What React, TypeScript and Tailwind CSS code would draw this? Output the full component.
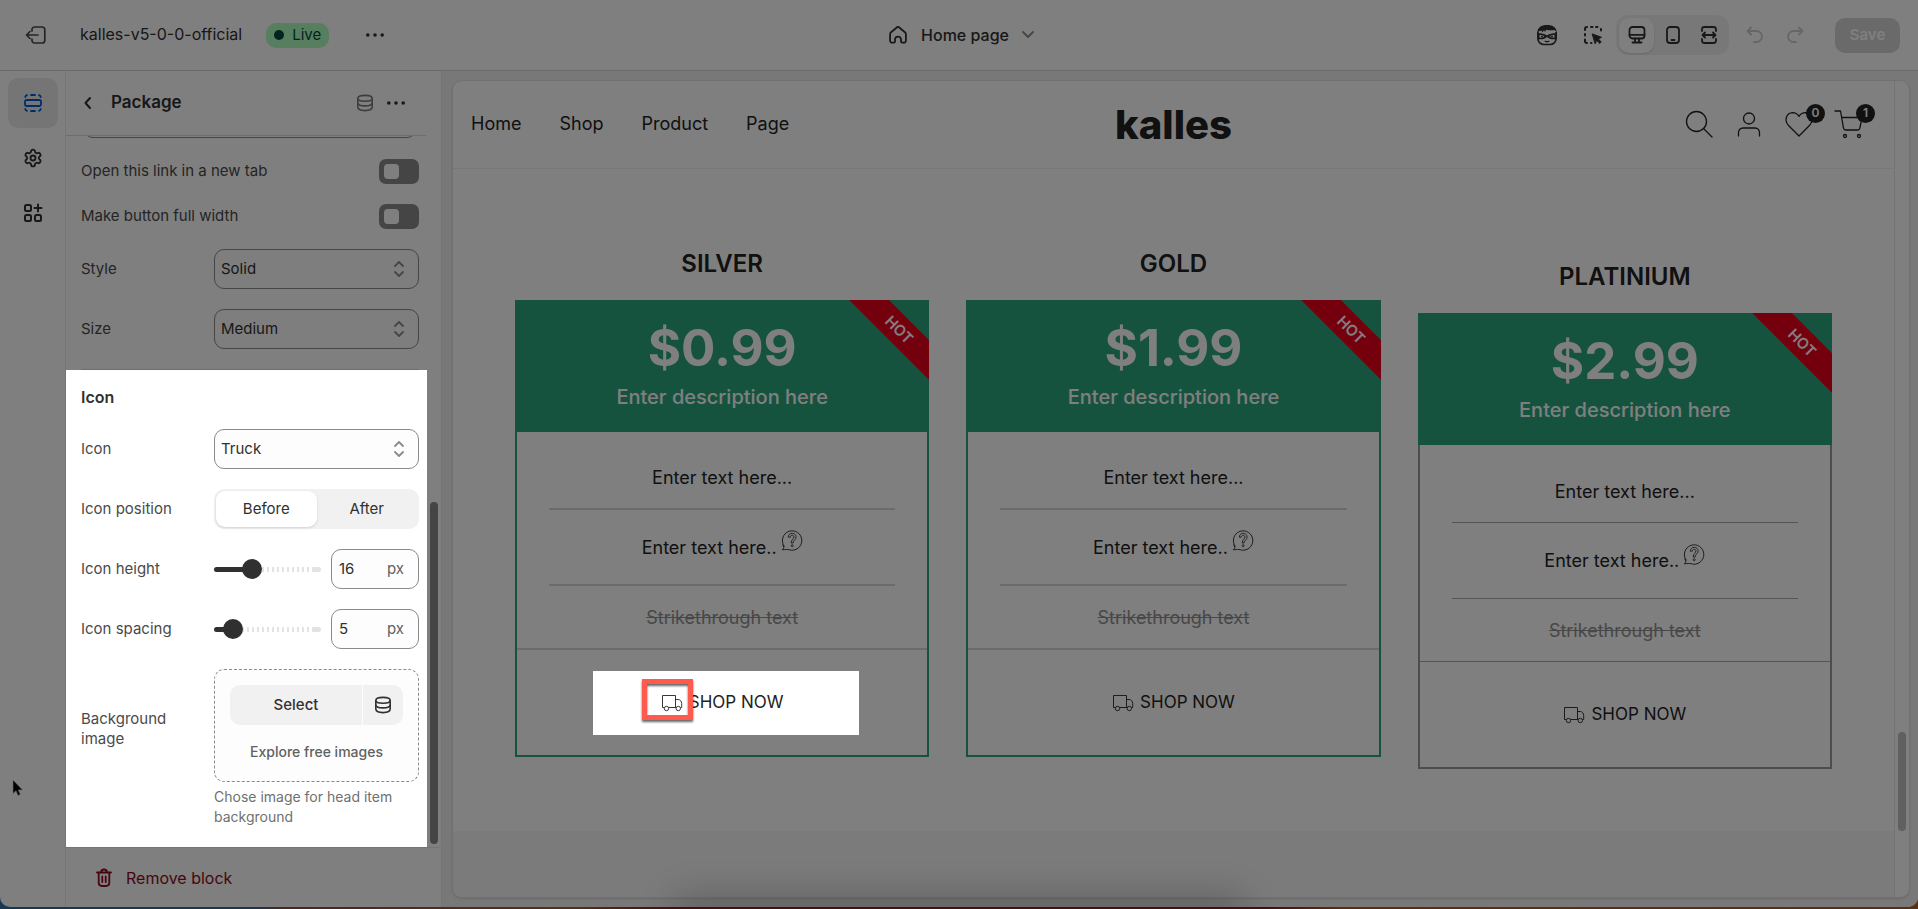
import React, { useState } from 'react';
import { clsx } from 'clsx';
import { Settings } from 'lucide-react';

const INK = '#303030';

type IconProps = { className?: string };

const DotsIcon = ({ className = '' }: IconProps) => (
    <svg viewBox="0 0 20 20" className={clsx('h-5 w-5', className)} fill={INK} aria-hidden="true">
        <circle cx="2.8" cy="10" r="1.8" />
        <circle cx="10" cy="10" r="1.8" />
        <circle cx="17.2" cy="10" r="1.8" />
    </svg>
);

const DatabaseIcon = ({ className = '' }: IconProps) => (
    <svg viewBox="0 0 18 18" className={clsx('h-[18px] w-[18px]', className)} fill="none" stroke="currentColor" strokeWidth="1.6" aria-hidden="true">
        <path d="M1.800 4.500c0-1.900 2.600-3.100 7.200-3.100s7.200 1.200 7.200 3.100-2.600 2.700-7.200 2.700-7.200-.8-7.200-2.700z" />
        <path d="M1.800 4.500v8.300c0 2.500 2.600 3.800 7.200 3.800s7.200-1.300 7.200-3.800V4.500" />
        <path d="M1.800 8.800c0 2 2.600 3.100 7.200 3.100s7.200-1.100 7.200-3.100" />
    </svg>
);

const SelectArrows = () => (
    <svg viewBox="0 0 12 18" className="pointer-events-none absolute right-[14px] top-[11px] h-[18px] w-3" fill="none" stroke="#8a8a8a" strokeWidth="1.800" strokeLinecap="round" strokeLinejoin="round" aria-hidden="true">
        <path d="M2 6l4-4 4 4M2 12l4 4 4-4" />
    </svg>
);

const TruckIcon = () => (
    <svg viewBox="0 0 22 18" className="h-[18px] w-[22px] shrink-0" fill="none" stroke="#222" strokeWidth="0.9" aria-hidden="true">
        <path d="M3.300 13.500H1.500v-12h13v12H7.700M14.500 5.500h2.700c2 0 3.500 2 3.500 4v4h-1.200M14.500 13.500h.7" />
        <circle cx="5.500" cy="14.500" r="2.200" />
        <circle cx="17.300" cy="14.500" r="2.200" />
    </svg>
);

const HelpIcon = () => (
    <svg viewBox="0 0 22 22" className="h-[22px] w-[22px]" fill="none" stroke="#222" strokeWidth="0.9" aria-hidden="true">
        <path d="M3.400 17.400A9.700 9.700 0 1 1 8.300 20.800c-2-.8-3.900 0-7.100-.1 1-.9 1.900-1.400 1.600-2.600l-1.200-2.500" />
        <path d="M7.300 8.200C7.300 5.800 9 4.300 11.200 4.300s3.900 1.600 3.900 3.600c0 3-3 3.200-3 6.100h-1.900c0-3.600 2.700-4 2.700-6 0-1-.7-1.700-1.700-1.700-1.200 0-1.900.8-1.900 1.900z" strokeWidth="0.8" />
        <circle cx="11.200" cy="16.700" r="1" strokeWidth="0.8" />
    </svg>
);

const inkStroke = {
    fill: 'none',
    stroke: INK,
    strokeWidth: 1.8,
    strokeLinecap: 'round' as const,
    strokeLinejoin: 'round' as const,
    viewBox: '0 0 20 20',
    className: 'h-5 w-5',
    'aria-hidden': true
};

const TopBar = () => (
    <header className="grid h-[71px] shrink-0 grid-cols-[1fr_auto_1fr] items-center border-b border-[#d4d4d4] bg-white">
        <div className="flex items-center">
            <button aria-label="Exit editor" className="ml-[25px] flex h-8 w-[22px] items-center justify-center">
                <svg {...inkStroke} viewBox="0 0 22 20" className="h-5 w-[22px]" strokeWidth="1.700" stroke="#4a4a4a">
                    <path d="M7 6V4.500A2.500 2.500 0 0 1 9.500 2H17a2.800 2.800 0 0 1 2.800 2.800v10.400A2.800 2.800 0 0 1 17 18H9.500A2.500 2.500 0 0 1 7 15.500V14M13 10H1.500M5 6.500L1.500 10 5 13.500" />
                </svg>
            </button>
            <span className="ml-[33px] pb-[2px] text-base text-[#303030]">kalles-v5-0-0-official</span>
            <span className="ml-6 flex h-[25px] items-center gap-2 rounded-[10px] bg-[#affebf] px-2 text-[15px] text-[#014b40]">
                <span className="h-[10px] w-[10px] rounded-full bg-[#014b40]" />
                Live
            </span>
            <button aria-label="Theme actions" className="ml-9"><DotsIcon /></button>
        </div>

        <button className="flex items-center gap-[14px] pl-[6px] text-base font-medium text-[#303030]">
            <svg {...inkStroke} className="h-[18px] w-[18px]" strokeWidth="2">
                <path d="M1.200 9.400c0-1 .4-1.800 1.100-2.500L8.600 1.600a2 2 0 0 1 2.800 0l6.300 5.300c.7.700 1.100 1.500 1.100 2.500v6.800a2.300 2.300 0 0 1-2.300 2.300h-1.700a1.500 1.500 0 0 1-1.500-1.500v-2a3.300 3.300 0 0 0-6.600 0v2a1.500 1.500 0 0 1-1.500 1.500H3.500a2.300 2.300 0 0 1-2.300-2.300z" />
            </svg>
            Home page
            <svg viewBox="0 0 14 10" className="-ml-[2px] h-[10px] w-[14px]" fill="none" stroke="#8a8a8a" strokeWidth="1.800" strokeLinecap="round" strokeLinejoin="round" aria-hidden="true">
                <path d="M2 2l5 5 5-5" />
            </svg>
        </button>

        <div className="flex items-center justify-end pr-[18px]">
            <button aria-label="Assistant" className="mr-[25px]">
                <svg viewBox="0 0 22 22" className="h-[22px] w-[22px]" fill="none" stroke={INK} strokeWidth="1.700" aria-hidden="true">
                    <path d="M1.900 8v6.500c0 3.600 3 6 6 6h6.200c3 0 6-2.400 6-6V8" />
                    <path d="M1.300 8.500C1.500 3.500 5 .9 11 .9s9.700 2.600 9.700 7.600l-2-2.500c-3 .6-6 .3-8.500-.3L9 8 8 6 6.700 8.200 5.300 6.500 3.200 7.200z" fill={INK} stroke="none" />
                    <path d="M1.500 9.500c3.500-.8 7 .2 9.500 2 2.500-1.800 6-2.800 9.500-2v5.300c-3.500 1.200-7 .5-9.500-1.900-2.500 2.400-6 3.100-9.500 1.900z" fill={INK} stroke="none" />
                    <path d="M3.500 11.200c1.700-.3 3.500.2 4.900 1.200-1.500 1.200-3.200 1.600-4.900 1.200zM18.500 11.200c-1.700-.3-3.500.2-4.900 1.200 1.500 1.200 3.200 1.600 4.900 1.200z" fill="#fff" stroke="none" />
                    <circle cx="6" cy="12.400" r="1" fill={INK} stroke="none" />
                    <circle cx="16" cy="12.400" r="1" fill={INK} stroke="none" />
                    <path d="M8.700 17c1.500.9 3.100.9 4.600 0" strokeWidth="1.400" />
                </svg>
            </button>
            <button aria-label="Inspector" className="mr-[13px]">
                <svg {...inkStroke} strokeWidth="2">
                    <path d="M2 5V4a2 2 0 0 1 2-2M8 2h1.500M13 2h1.500M18 4v1.500M2 9v1.500M2 14.500V16a2 2 0 0 0 2 2M8 18h.5" />
                    <path d="M9.500 9l9 3.300-3.300 1.500 3 3.200-1.400 1.400-3.200-3.100-1.300 3.200z" fill={INK} strokeWidth="1" />
                </svg>
            </button>
            <div className="flex h-10 w-[113px] items-center justify-between rounded-[12px] bg-[#f1f1f1] px-[3px]">
                <button aria-label="Desktop" className="flex h-[35px] w-[35px] items-center justify-center rounded-[10px] bg-white shadow">
                    <svg {...inkStroke}>
                        <rect x="2.500" y="2" width="15" height="11.500" rx="3" />
                        <path d="M2.500 9.800h15M8 13.500V17M12 13.500V17M5.500 17.500h9" />
                    </svg>
                </button>
                <button aria-label="Mobile" className="flex h-[35px] w-[35px] items-center justify-center">
                    <svg {...inkStroke}>
                        <rect x="4" y="2" width="12" height="16" rx="3" />
                        <path d="M8 2.200h4M8.500 15h3" />
                    </svg>
                </button>
                <button aria-label="Fullscreen" className="flex h-[35px] w-[35px] items-center justify-center">
                    <svg {...inkStroke}>
                        <path d="M3 6V4.500A2.500 2.500 0 0 1 5.500 2h9A2.500 2.500 0 0 1 17 4.500V6M3 14v1.500A2.500 2.500 0 0 0 5.500 18h9a2.500 2.500 0 0 0 2.500-2.500V14M4 10h12M6 7.500L3.500 10 6 12.500M14 7.500l2.500 2.500-2.500 2.500" />
                    </svg>
                </button>
            </div>
            <button aria-label="Undo" disabled className="ml-4">
                <svg {...inkStroke} stroke="#cccccc">
                    <path d="M6 2.500L2.500 6 6 9.500M3 6h8.500a5.500 5.500 0 0 1 0 11H9" />
                </svg>
            </button>
            <button aria-label="Redo" disabled className="ml-5">
                <svg {...inkStroke} stroke="#cccccc">
                    <path d="M14 2.500L17.500 6 14 9.500M17 6H8.500a5.500 5.500 0 0 0 0 11H11" />
                </svg>
            </button>
            <button disabled className="ml-[30px] h-[35px] w-[65px] rounded-[10px] bg-[#d4d4d4] text-[15px] font-semibold text-white">Save</button>
        </div>
    </header>
);

const Rail = () => (
    <nav aria-label="Editor" className="flex w-[66px] shrink-0 flex-col items-center gap-[5px] border-r border-[#ebebeb] pt-[7px]">
        <button aria-label="Sections" className="flex h-[50px] w-[50px] items-center justify-center rounded-[10px] bg-[#ebebeb]">
            <svg {...inkStroke} stroke="#005bd3">
                <rect x="2" y="7" width="16" height="6" rx="1.500" />
                <path d="M2.200 4A2.500 2.500 0 0 1 4 2.200M8 2h4M16 2.200A2.500 2.500 0 0 1 17.800 4M2.200 16A2.500 2.500 0 0 0 4 17.800M8 18h4M16 17.800a2.500 2.500 0 0 0 1.800-1.800" />
            </svg>
        </button>
        <button aria-label="Theme settings" className="flex h-[50px] w-[50px] items-center justify-center">
            <Settings size={20} color={INK} strokeWidth={2.2} />
        </button>
        <button aria-label="App embeds" className="flex h-[50px] w-[50px] items-center justify-center">
            <svg {...inkStroke} strokeWidth="2">
                <rect x="2" y="2" width="6" height="6" rx="1.500" />
                <rect x="2" y="12" width="6" height="6" rx="1.500" />
                <rect x="12" y="12" width="6" height="6" rx="1.500" />
                <path d="M15 1.500v7M11.500 5h7" />
            </svg>
        </button>
    </nav>
);

const Toggle = ({ id, label }: { id: string; label: string }) => {
    const [on, setOn] = useState(false);
    return (
        <div className="flex h-[25px] items-center justify-between">
            <label htmlFor={id}>{label}</label>
            <span className="relative h-[25px] w-10">
                <input id={id} type="checkbox" role="switch" checked={on} onChange={(e) => setOn(e.target.checked)} className="h-[25px] w-10 cursor-pointer appearance-none rounded-[7px] bg-[#8a8a8a] checked:bg-[#303030]" />
                <span className={clsx('pointer-events-none absolute top-[5px] h-[15px] w-[15px] rounded-[4px] bg-white', on ? 'left-5' : 'left-[5px]')} />
            </span>
        </div>
    );
};

const SelectRow = ({ id, label, options }: { id: string; label: string; options: string[] }) => (
    <div className="flex h-10 items-center justify-between">
        <label htmlFor={id}>{label}</label>
        <span className="relative h-10 w-[205px]">
            <select id={id} className="h-10 w-full appearance-none rounded-[10px] border border-[#8a8a8a] bg-[#fdfdfd] pl-[6px] text-[#303030]">
                {options.map((option) => <option key={option}>{option}</option>)}
            </select>
            <SelectArrows />
        </span>
    </div>
);

const RangeRow = ({ id, label, max, initial }: { id: string; label: string; max: number; initial: number }) => {
    const [value, setValue] = useState(initial);
    return (
        <div className="flex h-10 items-center">
            <label htmlFor={id} className="flex-1">{label}</label>
            <span className="relative mr-[10px] flex h-5 w-[107px] items-center">
                {/* unfilled part is ticked, filled part is solid */}
                <span className="absolute inset-x-0 h-[5px] rounded-full bg-[repeating-linear-gradient(90deg,#ffffff_0px,#ffffff_3px,#e3e3e3_3px,#e3e3e3_5px)]" />
                <span className="absolute right-0 h-[5px] w-[7px] rounded-r-full bg-[#e3e3e3]" />
                <span className="absolute left-0 h-[5px] rounded-full bg-[#303030]" style={{ width: `${(value / max) * 87 + 10}px` }} />
                <input
                    id={id}
                    type="range"
                    min={0}
                    max={max}
                    value={value}
                    onChange={(e) => setValue(Number(e.target.value))}
                    className="relative h-5 w-full appearance-none bg-transparent [&::-webkit-slider-thumb]:h-5 [&::-webkit-slider-thumb]:w-5 [&::-webkit-slider-thumb]:appearance-none [&::-webkit-slider-thumb]:rounded-full [&::-webkit-slider-thumb]:bg-[#303030]"
                />
            </span>
            <span className="flex h-10 w-[88px] items-center rounded-[10px] border border-[#8a8a8a] bg-[#fdfdfd] pl-[7px] pr-[14px] text-[#303030]">
                <input aria-label={`${label} value`} value={value} onChange={(e) => setValue(Number(e.target.value) || 0)} className="w-0 flex-1 outline-none" />
                <span className="text-[#616161]">px</span>
            </span>
        </div>
    );
};

const IconSettings = () => {
    const [position, setPosition] = useState('Before');
    return (
        <section className="relative z-20 flex flex-col gap-5 bg-white pb-5 pl-[15px] pr-2 pt-[17px]">
            <h3 className="mb-[2px] text-base font-semibold leading-5 text-[#303030]">Icon</h3>
            <SelectRow id="icon" label="Icon" options={['Truck', 'Cart', 'None']} />
            <div className="flex h-10 items-center justify-between">
                <span id="icon-position">Icon position</span>
                <div role="group" aria-labelledby="icon-position" className="flex h-10 w-[205px] items-center rounded-[10px] bg-[#f1f1f1] px-[2px]">
                    {['Before', 'After'].map((name) => (
                        <button
                            key={name}
                            onClick={() => setPosition(name)}
                            className={clsx('h-9 flex-1 rounded-[9px] text-[#303030]', position === name && 'bg-white shadow')}
                        >
                            {name}
                        </button>
                    ))}
                </div>
            </div>
            <RangeRow id="icon-height" label="Icon height" max={50} initial={16} />
            <RangeRow id="icon-spacing" label="Icon spacing" max={50} initial={5} />
            <div className="flex justify-between">
                <span className="w-[110px] pt-10 leading-5">Background image</span>
                <div className="w-[205px]">
                    <div className="flex h-[113px] flex-col items-center rounded-[10px] border border-dashed border-[#8a8a8a] bg-[#fdfdfd] px-[15px] pt-[15px]">
                        <div className="flex h-10 w-full gap-px">
                            <button className="flex-1 rounded-l-[10px] bg-[#f1f1f1] font-medium text-[#303030]">Select</button>
                            <button aria-label="Connect dynamic source" className="flex w-10 items-center justify-center rounded-r-[10px] bg-[#f1f1f1] text-[#303030]">
                                <DatabaseIcon />
                            </button>
                        </div>
                        <a href="#explore" className="mt-[17px] text-[14px] font-medium leading-5 text-[#616161]">Explore free images</a>
                    </div>
                    <p className="mt-[5px] text-[14px] leading-5 text-[#707070]">Chose image for head item background</p>
                </div>
            </div>
        </section>
    );
};

const SettingsPanel = () => (
    <aside className="flex w-[376px] shrink-0 flex-col border-r border-[#ebebeb] text-[15px] text-[#4a4a4a]">
        <div className="mr-[15px] flex h-[65px] shrink-0 items-center border-b border-[#dcdcdc] pl-4 pr-[20px]">
            <button aria-label="Back">
                <svg {...inkStroke} viewBox="0 0 12 16" className="h-4 w-3" strokeWidth="2">
                    <path d="M8 3L3.500 8 8 13" />
                </svg>
            </button>
            <h2 className="ml-[17px] flex-1 text-[17px] font-semibold text-[#303030]">Package</h2>
            <button aria-label="Connect source" className="mr-3 text-[#7a7a7a]"><DatabaseIcon /></button>
            <button aria-label="Block actions"><DotsIcon /></button>
        </div>

        <div className="flex min-h-0 flex-1">
            <div className="min-w-0 flex-1">
                <div className="flex flex-col pl-[15px] pr-2">
                    <div className="h-[2px] overflow-hidden px-[2px]">
                        <div className="-mt-[38px] h-10 rounded-[10px] border border-[#8a8a8a]" />
                    </div>
                    <div className="flex flex-col gap-5 border-b border-[#dcdcdc] pb-5 pt-[21px]">
                        <Toggle id="new-tab" label="Open this link in a new tab" />
                        <Toggle id="full-width" label="Make button full width" />
                        <SelectRow id="style" label="Style" options={['Solid', 'Outline']} />
                        <SelectRow id="size" label="Size" options={['Medium', 'Small', 'Large']} />
                    </div>
                </div>
                <IconSettings />
            </div>
            <div className="flex w-[14px] flex-col justify-end pb-[3px] pl-[3px]">
                <div className="h-[342px] w-2 rounded-full bg-[#8a8a8a]" />
            </div>
        </div>

        <div className="h-[60px] shrink-0 border-t border-[#ebebeb] pl-7">
            <button className="flex h-full items-center gap-3 text-base text-[#8e0b21]">
                <svg {...inkStroke} stroke="#8e0b21">
                    <path d="M3 4.500h14M7 4.500a3 3 0 0 1 6 0M4.700 4.500v10.300A3.200 3.200 0 0 0 7.900 18h4.200a3.200 3.200 0 0 0 3.200-3.200V4.500M8.300 8.500v5.500M11.700 8.500v5.500" />
                </svg>
                Remove block
            </button>
        </div>
    </aside>
);

const navLinks = ['Home', 'Shop', 'Product', 'Page'];

const CountBadge = ({ children }: { children: React.ReactNode }) => (
    <span className="absolute -right-[11px] -top-[6px] flex h-[19px] w-[19px] items-center justify-center rounded-full bg-[#222] text-[12px] font-semibold text-white">{children}</span>
);

const shopIcon = {
    fill: 'none',
    stroke: '#222',
    strokeWidth: 1.3,
    strokeLinecap: 'round' as const,
    strokeLinejoin: 'round' as const,
    viewBox: '0 0 30 30',
    className: 'h-[30px] w-[30px]',
    'aria-hidden': true
};

const StoreHeader = () => (
    <div className="grid h-[88px] grid-cols-[1fr_auto_1fr] items-center border-b border-[#f0f0f0] px-[18px] text-[#222]">
        <nav className="flex gap-[38px] pb-[2px] text-[18px]">
            {navLinks.map((link) => <a key={link} href={`#${link.toLowerCase()}`}>{link}</a>)}
        </nav>
        <a href="#kalles" className="text-[40px] font-extrabold leading-10">kalles</a>
        <div className="flex items-center justify-end gap-5 pr-3">
            <button aria-label="Search">
                <svg {...shopIcon}>
                    <circle cx="12.500" cy="11.500" r="10" />
                    <path d="M19.500 18.500l8.500 8.500" />
                </svg>
            </button>
            <button aria-label="Account">
                <svg {...shopIcon}>
                    <circle cx="15" cy="8.500" r="5.500" />
                    <path d="M4.500 26v-3.500a4.500 4.500 0 0 1 4.500-4.500h12a4.500 4.500 0 0 1 4.500 4.500v3.500" />
                </svg>
            </button>
            <button aria-label="Wishlist" className="relative">
                <svg {...shopIcon}>
                    <path d="M15 26L4.300 15.200C-.5 9.500 3 3 8.500 2.700c2.700 0 5 1.300 6.500 3.600 1.500-2.300 3.800-3.600 6.500-3.600C27 3 30.500 9.500 25.700 15.200z" />
                </svg>
                <CountBadge>0</CountBadge>
            </button>
            <button aria-label="Cart" className="relative">
                <svg {...shopIcon}>
                    <path d="M1 1h5.500L9.500 18c.2 1.200 1 2 2.200 2h12c1.200 0 2-.8 2.200-2L28 7.500H8" />
                    <circle cx="11" cy="26" r="1.500" />
                    <circle cx="25" cy="26" r="1.500" />
                </svg>
                <CountBadge>1</CountBadge>
            </button>
        </div>
    </div>
);

const packages = [
    { name: 'SILVER', price: '$0.99', green: true, spotlight: true },
    { name: 'GOLD', price: '$1.99', green: true, spotlight: false },
    { name: 'PLATINIUM', price: '$2.99', green: false, spotlight: false }
];

const PackageCard = ({ item }: { item: (typeof packages)[number] }) => {
    const line = item.green ? 'border-b-2 border-[#d6d6d6]' : 'border-b border-[#aaaaaa]';
    return (
        <article className={clsx('text-center text-[18px] text-[#222]', !item.green && 'mt-[13px]')}>
            <h2 className="mb-[18px] text-2xl font-semibold leading-[37px]">{item.name}</h2>
            <div className="relative h-[132px] overflow-hidden bg-[#2aa67f] pt-[17px] text-white">
                <div className="text-[51px] font-bold leading-[62px]">{item.price}</div>
                <div className="mt-1 text-xl font-medium leading-7">Enter description here</div>
                <div className="absolute -right-[30px] top-4 h-7 w-[120px] rotate-45 bg-[#e60018] text-[15px] font-semibold leading-7">HOT</div>
            </div>
            <div className={clsx('border-2 border-t-0', item.green ? 'border-[#2aa67f]' : 'border-[#9a9a9a]')}>
                <div className="px-8">
                    <p className={clsx('flex h-[78px] items-center justify-center pt-[15px]', line)}>Enter text here...</p>
                    <p className={clsx('flex h-[76px] items-center justify-center gap-1', line)}>
                        Enter text here..
                        <span className="pb-[14px]"><HelpIcon /></span>
                    </p>
                    <p className="flex h-[62px] items-center justify-center text-[#909090]"><s>Strikethrough text</s></p>
                </div>
                <div className={clsx('h-0', line)} />
                <div className="flex h-[105px] items-center justify-center">
                    <a
                        href="#shop-now"
                        className={clsx('relative flex h-16 w-[266px] items-center justify-center gap-[6px] text-[17px]', item.spotlight && 'z-20')}
                    >
                        {item.spotlight && <span className="absolute inset-y-0 -right-1 left-1 -z-10 bg-white" />}
                        <TruckIcon />
                        SHOP NOW
                        {item.spotlight && (
                            <span className="absolute left-[53px] top-2 h-[41px] w-[51px] border-[5px] border-[#fe5a4d] drop-shadow-[0_2px_1px_rgba(0,0,0,0.6)]" />
                        )}
                    </a>
                </div>
            </div>
        </article>
    );
};

const Preview = () => (
    <main className="min-w-0 flex-1 bg-[#f1f1f1] pb-[9px] pl-[10px] pr-2 pt-[9px]">
        <div className="flex h-full overflow-hidden rounded-[10px] border border-[#e3e3e3] bg-white shadow">
            <div className="flex min-w-0 flex-1 flex-col">
                <StoreHeader />
                <section className="grid grid-cols-3 gap-[37px] px-[62px] pb-[62px] pt-[76px]">
                    {packages.map((item) => <PackageCard key={item.name} item={item} />)}
                </section>
                <div className="flex-1 bg-[#f6f6f6]" />
            </div>
            <div className="flex w-[15px] flex-col justify-end border-l border-[#e8e8e8] pb-[66px] pl-[3px]">
                <div className="h-[99px] w-2 rounded-full bg-[#c1c1c1]" />
            </div>
        </div>
    </main>
);

export default function App() {
    return (
        <div className="relative flex min-h-screen flex-col bg-[linear-gradient(90deg,#2f6ea6_0%,#2f6ea6_13%,#a04a3a_15%,#b0622a_30%,#8a2010_35%,#8a2010_66%,#c05a1c_70%,#b0602a_100%)] pb-[2px] font-[Inter,sans-serif]">
            <div className="relative flex flex-1 flex-col overflow-hidden rounded-b-[10px] bg-white">
                <TopBar />
                <div className="flex flex-1">
                    <Rail />
                    <SettingsPanel />
                    <Preview />
                </div>
                {/* shadow of the save bar parked below the window */}
                <div className="pointer-events-none absolute inset-x-[36%] -bottom-2 h-1 shadow-[0_0_36px_16px_rgba(0,0,0,0.2)]" />
            </div>
            {/* dims everything except the highlighted parts */}
            <div className="pointer-events-none absolute inset-0 z-10 bg-black/50" />
            <svg viewBox="0 0 12 18" className="absolute left-3 top-[779px] z-30 h-[18px] w-3" aria-hidden="true">
                <path d="M1 1v13.500l3-2.800 2 4.800 2.300-1-2-4.600h4.200z" fill="#000" stroke="#666" strokeWidth="0.600" />
            </svg>
        </div>
    );
}
